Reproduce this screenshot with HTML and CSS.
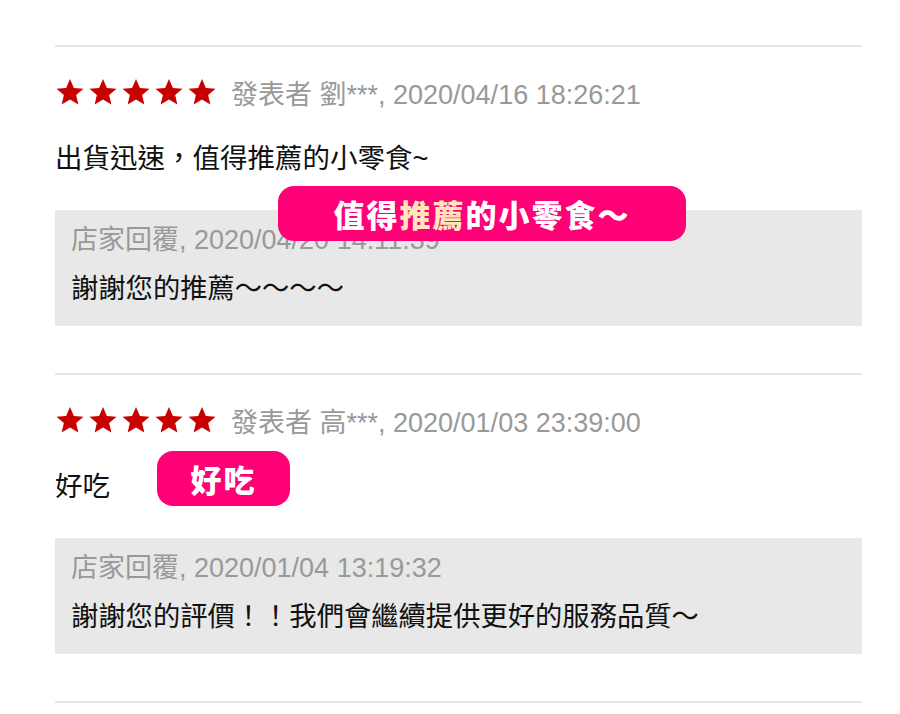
FILE: index.html
```html
<!DOCTYPE html>
<html lang="zh-Hant">
<head>
    <meta charset="UTF-8">
    <meta name="viewport" content="width=device-width, initial-scale=1.0">
    <title>商品評價</title>
    <link rel="stylesheet" href="styles.css">
</head>
<body>

<div class="review-list">

    <div class="review">
        <div class="review-meta">
            <span class="stars">
                <svg class="star" viewBox="0 0 24 24"><path d="M12 1.5l3.1 7.2 7.7.6-5.9 5.1 1.8 7.6L12 17.9l-6.7 4.1 1.8-7.6-5.9-5.1 7.7-.6z"/></svg>
                <svg class="star" viewBox="0 0 24 24"><path d="M12 1.5l3.1 7.2 7.7.6-5.9 5.1 1.8 7.6L12 17.9l-6.7 4.1 1.8-7.6-5.9-5.1 7.7-.6z"/></svg>
                <svg class="star" viewBox="0 0 24 24"><path d="M12 1.5l3.1 7.2 7.7.6-5.9 5.1 1.8 7.6L12 17.9l-6.7 4.1 1.8-7.6-5.9-5.1 7.7-.6z"/></svg>
                <svg class="star" viewBox="0 0 24 24"><path d="M12 1.5l3.1 7.2 7.7.6-5.9 5.1 1.8 7.6L12 17.9l-6.7 4.1 1.8-7.6-5.9-5.1 7.7-.6z"/></svg>
                <svg class="star" viewBox="0 0 24 24"><path d="M12 1.5l3.1 7.2 7.7.6-5.9 5.1 1.8 7.6L12 17.9l-6.7 4.1 1.8-7.6-5.9-5.1 7.7-.6z"/></svg>
            </span>
            <span class="author">發表者 劉***, 2020/04/16 18:26:21</span>
        </div>
        <p class="comment">出貨迅速，值得推薦的小零食~</p>
        <div class="reply">
            <div class="reply-head">店家回覆, 2020/04/20 14:11:39</div>
            <div class="reply-text">謝謝您的推薦～～～～</div>
        </div>
        <div class="badge badge-one">值得<span class="hl">推薦</span>的小零食～</div>
    </div>

    <div class="review">
        <div class="review-meta">
            <span class="stars">
                <svg class="star" viewBox="0 0 24 24"><path d="M12 1.5l3.1 7.2 7.7.6-5.9 5.1 1.8 7.6L12 17.9l-6.7 4.1 1.8-7.6-5.9-5.1 7.7-.6z"/></svg>
                <svg class="star" viewBox="0 0 24 24"><path d="M12 1.5l3.1 7.2 7.7.6-5.9 5.1 1.8 7.6L12 17.9l-6.7 4.1 1.8-7.6-5.9-5.1 7.7-.6z"/></svg>
                <svg class="star" viewBox="0 0 24 24"><path d="M12 1.5l3.1 7.2 7.7.6-5.9 5.1 1.8 7.6L12 17.9l-6.7 4.1 1.8-7.6-5.9-5.1 7.7-.6z"/></svg>
                <svg class="star" viewBox="0 0 24 24"><path d="M12 1.5l3.1 7.2 7.7.6-5.9 5.1 1.8 7.6L12 17.9l-6.7 4.1 1.8-7.6-5.9-5.1 7.7-.6z"/></svg>
                <svg class="star" viewBox="0 0 24 24"><path d="M12 1.5l3.1 7.2 7.7.6-5.9 5.1 1.8 7.6L12 17.9l-6.7 4.1 1.8-7.6-5.9-5.1 7.7-.6z"/></svg>
            </span>
            <span class="author">發表者 高***, 2020/01/03 23:39:00</span>
        </div>
        <p class="comment">好吃</p>
        <div class="reply">
            <div class="reply-head">店家回覆, 2020/01/04 13:19:32</div>
            <div class="reply-text">謝謝您的評價！！我們會繼續提供更好的服務品質～</div>
        </div>
        <div class="badge badge-two">好吃</div>
    </div>

    <div class="review review-end"></div>

</div>

</body>
</html>
```

FILE: styles.css
```css
:root {
    --star-color: #c80000;
    --meta-color: #999999;
    --text-color: #111111;
    --line-color: #e6e6e6;
    --reply-bg: #e8e8e8;
    --badge-color: #ff0076;
    --badge-hl: #ffe6bd;
}

body {
    margin: 0;
    background: #ffffff;
    font-family: "Liberation Sans", "Noto Sans CJK TC", sans-serif;
    color: var(--text-color);
}

.review-list {
    width: 807px;
    margin-left: 55px;
    padding-top: 45px;
}

.review {
    position: relative;
    border-top: 2px solid var(--line-color);
    padding-top: 28px;
    padding-bottom: 47px;
}

.review-end {
    padding: 0;
}

.review-meta {
    display: flex;
    align-items: center;
    height: 34px;
    font-size: 27px;
    color: var(--meta-color);
}

.stars {
    display: flex;
    gap: 3px;
    margin-right: 14px;
}

.star {
    width: 30px;
    height: 30px;
    fill: var(--star-color);
}

.comment {
    margin: 32px 0 33px;
    font-size: 27.5px;
    line-height: 36px;
}

.reply {
    background: var(--reply-bg);
    padding: 13px 16px 19px;
}

.reply-head {
    font-size: 27px;
    line-height: 34px;
    color: var(--meta-color);
}

.reply-text {
    margin-top: 14px;
    font-size: 27.3px;
    line-height: 36px;
}

.badge {
    position: absolute;
    display: flex;
    align-items: center;
    justify-content: center;
    height: 55px;
    border-radius: 16px;
    background: var(--badge-color);
    color: #ffffff;
    font-family: "Noto Sans CJK TC", sans-serif;
    font-weight: 900;
    font-size: 31px;
    letter-spacing: 2px;
}

.badge .hl {
    color: var(--badge-hl);
}

.badge-one {
    top: 139px;
    left: 223px;
    width: 408px;
}

.badge-two {
    top: 76px;
    left: 102px;
    width: 133px;
}
```
